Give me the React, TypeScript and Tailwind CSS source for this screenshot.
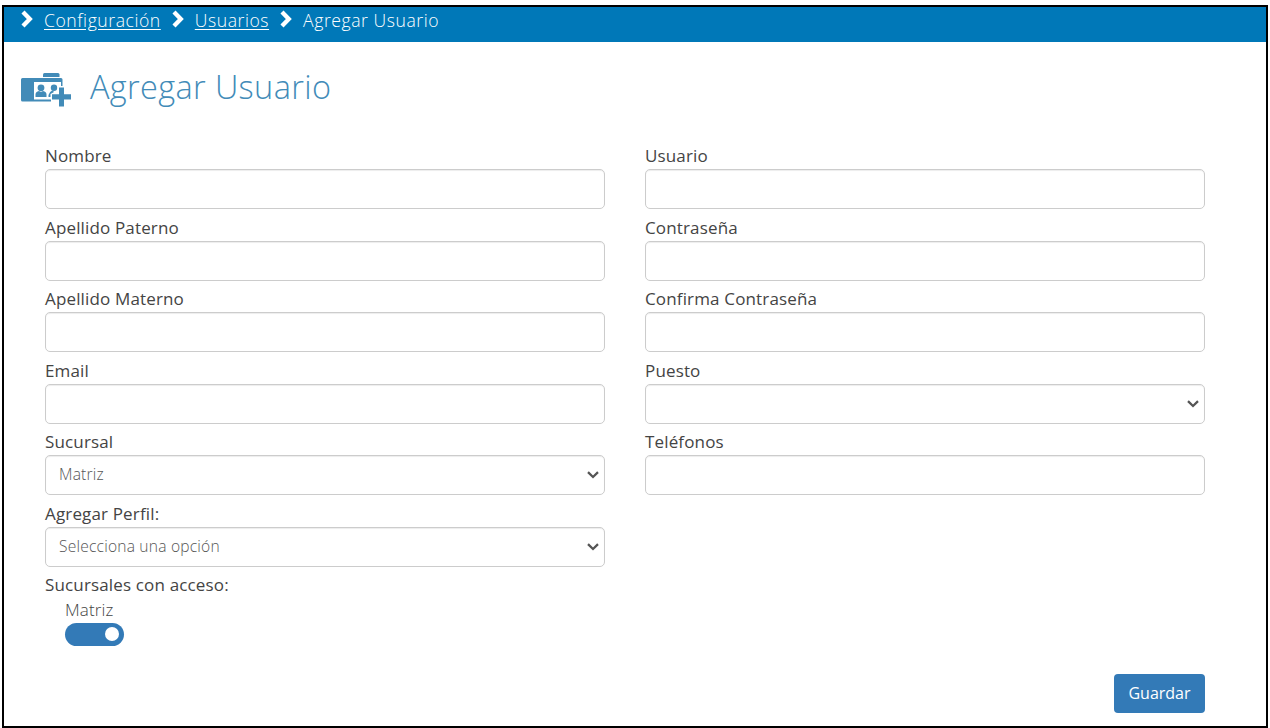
import { FC, ReactNode } from 'react'

type FieldProps = {
  label: string
  type?: 'text' | 'password' | 'email' | 'tel'
  options?: string[]
}

const BreadcrumbArrow: FC = () => (
  <svg width="13" height="18" viewBox="0 0 13 18" className="-mt-0.5 shrink-0">
    <path d="M3 2L9.800 9L3 16" fill="none" stroke="#fff" strokeWidth="4.300" />
  </svg>
)

const UserCardIcon: FC = () => (
  <svg width="50" height="34" viewBox="0 0 50 34" fill="#428bb8">
    <path d="M22 4V1.500Q22 0 23.500 0H37Q38.500 0 38.500 1.500V4Z" />
    <path
      fillRule="evenodd"
      d="M1.500 5H40Q41.500 5 41.500 6.500V13H40V9H13V26.500H30V28.500H1.500Q0 28.500 0 27V6.500Q0 5 1.500 5Z"
    />
    <circle cx="20" cy="14.800" r="3.400" />
    <path d="M14.500 24V21.500Q14.500 18.600 18 18L20 19L22 18Q25.500 18.600 25.500 21.500V24Z" />
    <circle cx="33" cy="14.800" r="3.200" />
    <path d="M27.500 24V22Q28 19 31.500 17.300L33 19L29.500 21V24Z" />
    <path d="M38 14.500H43V21.300H50V26.500H43V33.500H38V26.500H31V21.300H38Z" />
  </svg>
)

const Field: FC<FieldProps> = ({ label, type = 'text', options }) => (
  <label className="block h-16">
    <span className="block h-6 text-[17px] leading-[22px] tracking-[0.15px] text-[#444]">
      {label}
    </span>
    {options ? (
      <span className="relative block">
        <select className="block h-10 w-full appearance-none rounded-[5px] border border-[#ccc] bg-white px-[13px] text-[15.600px] tracking-[0.2px] font-light text-[#555] shadow-[inset_0_1px_1px_rgba(0,0,0,0.075)]">
          {options.map((option) => (
            <option key={option}>{option}</option>
          ))}
        </select>
        <svg
          width="12"
          height="8"
          viewBox="0 0 12 8"
          className="absolute top-4 right-1.5"
        >
          <path d="M1 1.200L6 6L11 1.200" fill="none" stroke="#555" strokeWidth="2.300" />
        </svg>
      </span>
    ) : (
      <input
        type={type}
        className="block h-10 w-full rounded-[5px] border border-[#ccc] bg-white px-[13px] shadow-[inset_0_1px_1px_rgba(0,0,0,0.075)]"
      />
    )}
  </label>
)

const Column: FC<{ children: ReactNode }> = ({ children }) => (
  <div className="flex flex-col gap-[7.5px]">{children}</div>
)

const App: FC = () => {
  return (
    <div className="h-[728px] w-[1270px] bg-white pt-[4.5px] pl-[2px] font-['Open_Sans',sans-serif]">
      <div className="flex h-[723px] w-[1266px] flex-col border-2 border-black">
        <nav className="flex h-[35.500px] shrink-0 items-start bg-[#0078b8] pt-[1.500px] pl-4 text-[17.600px] leading-6 tracking-[0.55px] font-light text-white">
          <div className="flex h-6 items-center">
            <BreadcrumbArrow />
            <a href="#" className="ml-[11px] underline underline-offset-2">
              Configuración
            </a>
            <span className="ml-[10px] flex">
              <BreadcrumbArrow />
            </span>
            <a href="#" className="ml-[11px] underline underline-offset-2">
              Usuarios
            </a>
            <span className="ml-[10px] flex">
              <BreadcrumbArrow />
            </span>
            <span className="ml-[11px]">Agregar Usuario</span>
          </div>
        </nav>

        <header className="mt-[22px] flex h-[50px] items-center pl-[17px] text-[#428bb8]">
          <span className="mt-0.5">
            <UserCardIcon />
          </span>
          <h1 className="-mt-[5px] ml-[19px] text-[32.500px] leading-[50px] tracking-[0.35px] font-light">
            Agregar Usuario
          </h1>
        </header>

        <form className="mt-[31px] flex flex-col px-[41px]">
          <div className="grid w-[1160px] grid-cols-2 gap-x-10">
            <Column>
              <Field label="Nombre" />
              <Field label="Apellido Paterno" />
              <Field label="Apellido Materno" />
              <Field label="Email" type="email" />
              <Field label="Sucursal" options={['Matriz']} />
              <Field label="Agregar Perfil:" options={['Selecciona una opción']} />
            </Column>
            <Column>
              <Field label="Usuario" />
              <Field label="Contraseña" type="password" />
              <Field label="Confirma Contraseña" type="password" />
              <Field label="Puesto" options={['']} />
              <Field label="Teléfonos" type="tel" />
            </Column>
          </div>

          <div className="mt-[7px] h-6 text-[17px] leading-[22px] tracking-[0.15px] text-[#444]">
            Sucursales con acceso:
          </div>
          <div className="ml-5 flex w-fit flex-col">
            <span className="text-[17px] leading-6 tracking-[0.15px] font-light text-[#444]">
              Matriz
            </span>
            <button
              type="button"
              role="switch"
              aria-checked="true"
              className="mt-px flex h-[23px] w-[59px] items-center justify-end rounded-full bg-[#337ab7] pr-[5px]"
            >
              <span className="h-3.5 w-3.5 rounded-full bg-white" />
            </button>
          </div>
          <button
            type="submit"
            className="mt-[28px] ml-[1069px] h-[39px] w-[91px] rounded-[4px] bg-[#337ab7] text-[16px] text-white"
          >
            Guardar
          </button>
        </form>
      </div>
    </div>
  )
}

export default App
